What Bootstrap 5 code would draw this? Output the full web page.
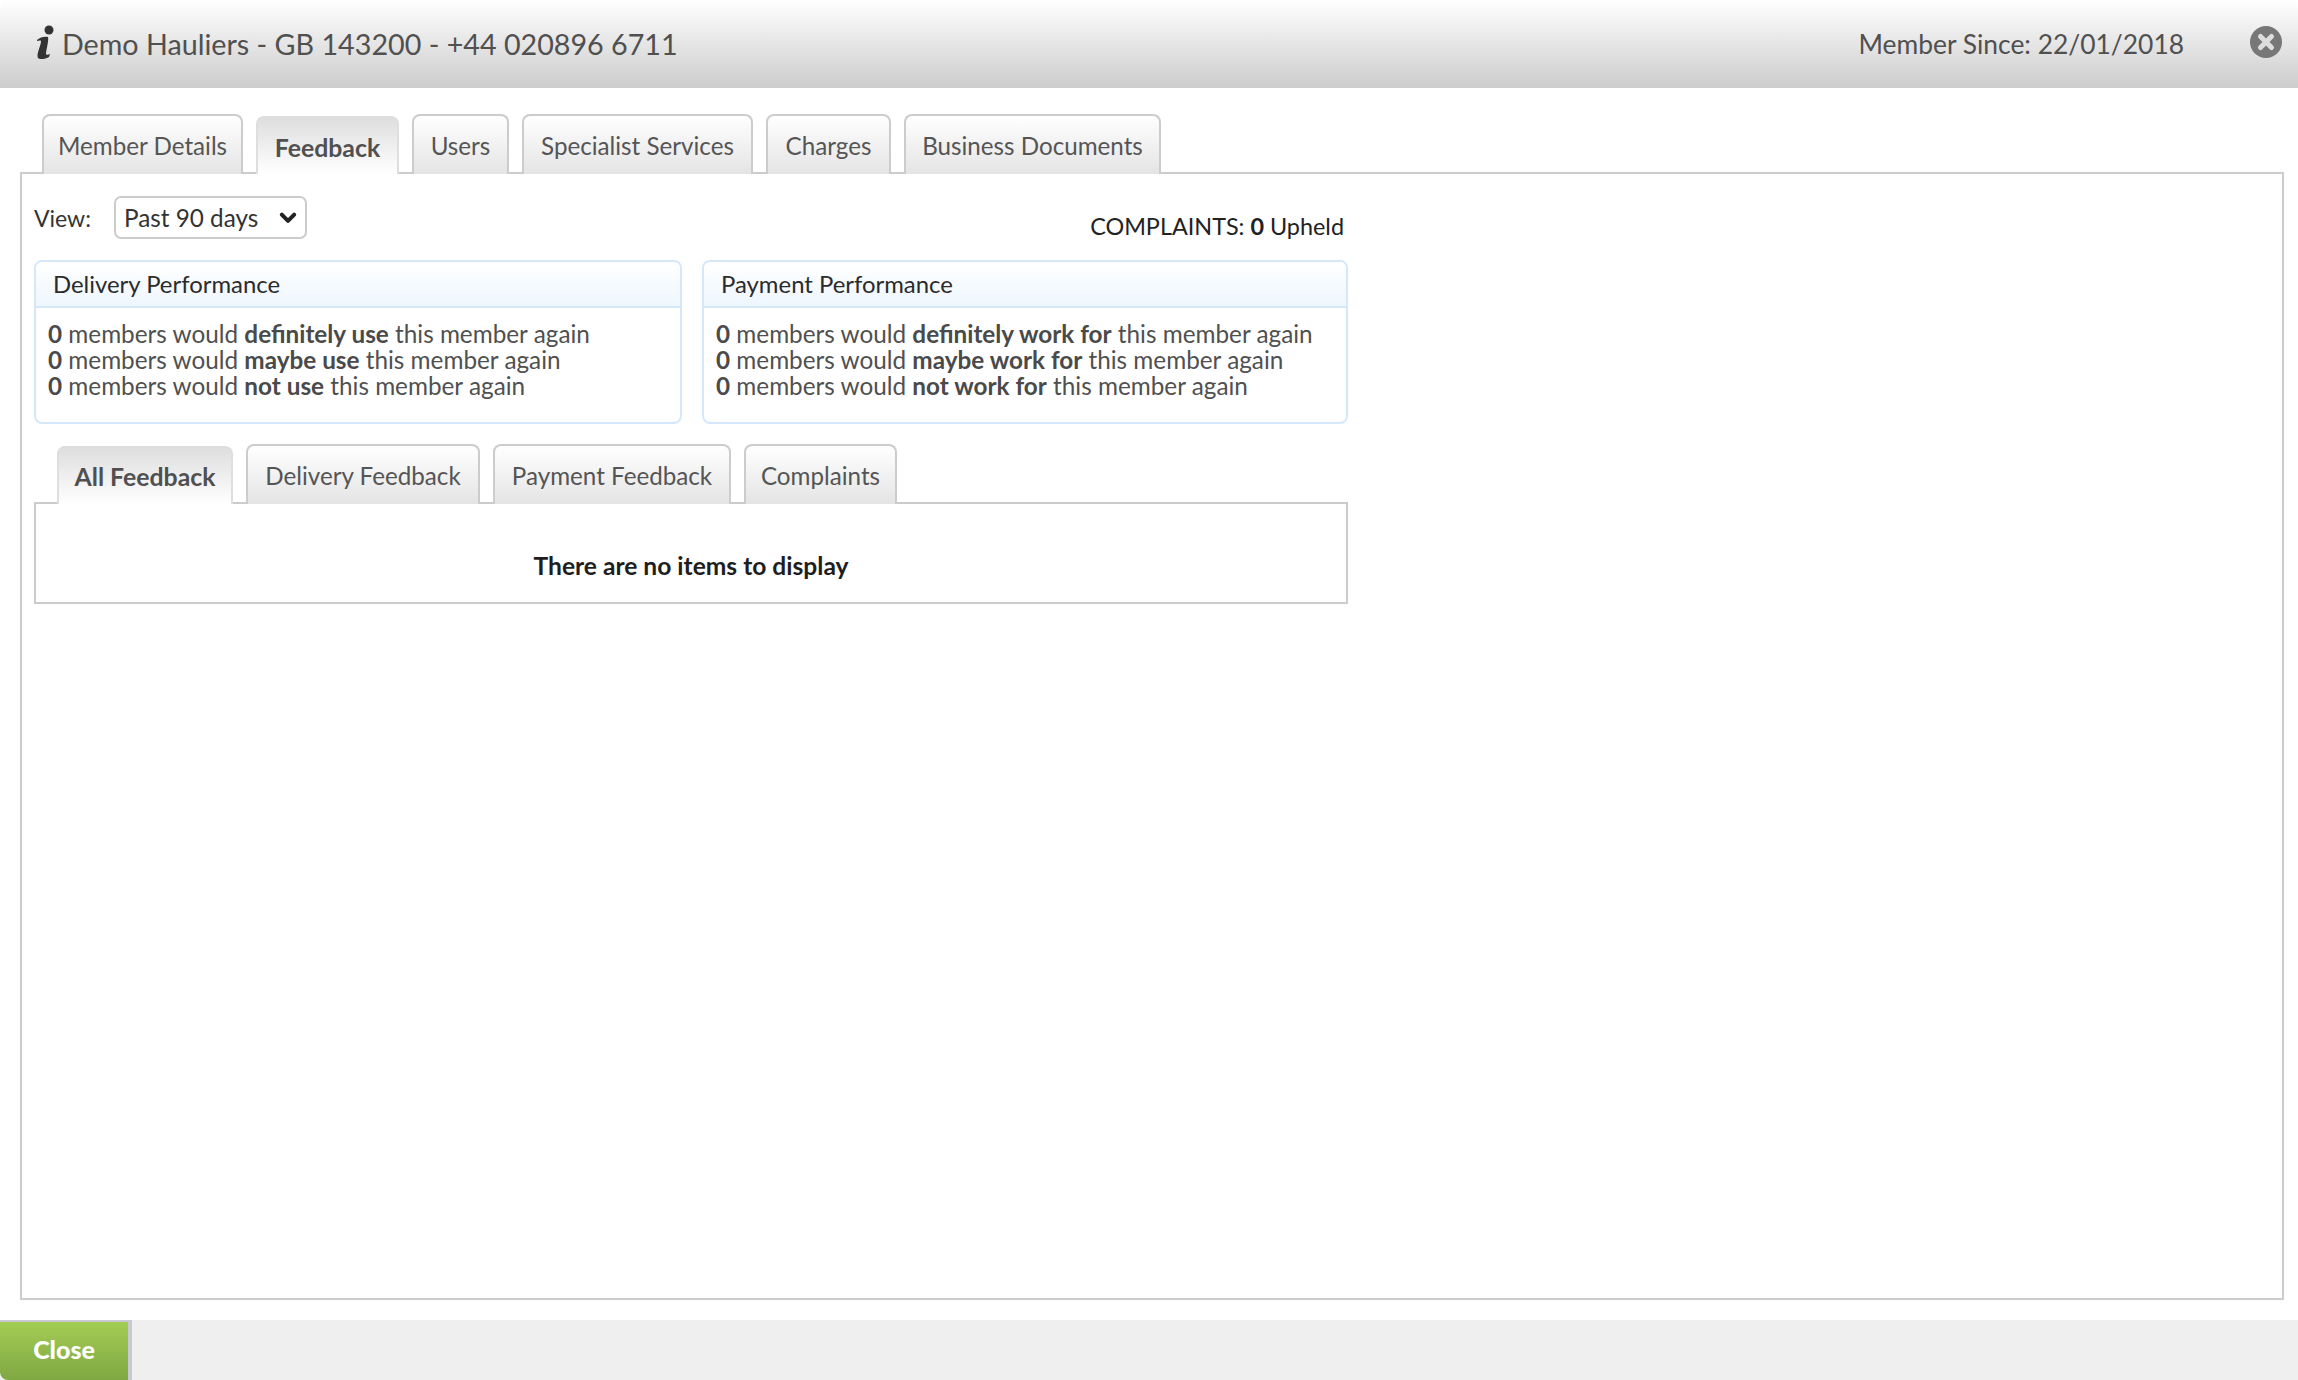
<!DOCTYPE html>
<html lang="en">
<head>
<meta charset="utf-8">
<title>Member</title>
<link rel="stylesheet" href="https://cdn.jsdelivr.net/npm/bootstrap@5.3.0/dist/css/bootstrap.min.css">
<style>
html,body{height:100%;}
body{background:#fff;font-family:Lato,"Liberation Sans",sans-serif;font-size:24.3px;line-height:26px;color:#505050;overflow:hidden;}
.shell{height:1380px;}
.head-bar{height:88px;background:linear-gradient(#fff,#ccc);padding:0 16px 0 34px;border-top-left-radius:10px;font-size:28.7px;color:#505050;}
.info-i{width:24px;height:36px;flex:none;margin-right:4px;margin-top:-2px;filter:blur(.5px);}
.since{font-size:26.4px;margin-right:66px;}
.shut{width:32px;height:32px;flex:none;margin-top:-4px;filter:blur(.4px);}
.main-area{padding:26px 14px 0 20px;flex:1 1 auto;min-height:0;display:flex;flex-direction:column;}
.tab-row{gap:13px;border:0;padding-left:22px;position:relative;z-index:1;}
.tab-row .nav-link{height:60px;margin:0;margin-bottom:-2px;padding:2px 0 0;display:flex;align-items:center;justify-content:center;font-size:24.2px;color:#555;border:2px solid #ccc;border-bottom:0;border-radius:8px 8px 0 0;background:linear-gradient(#fff,#e4e4e4);}
.tab-row .nav-link.active{height:58px;margin-top:2px;font-weight:700;font-size:24.8px;color:#505050;border-color:#dedede;background:linear-gradient(#dedede,#fff);padding-top:4px;}
.tab-row.sub{padding-left:23px;}
.tab-row.sub .nav-link.active{padding-top:2px;}
.tw-201{width:201px;}.tw-143{width:143px;}.tw-97{width:97px;}.tw-231{width:231px;}.tw-125{width:125px;}.tw-257{width:257px;}
.tw-176{width:176px;}.tw-234{width:234px;}.tw-238{width:238px;}.tw-153{width:153px;}
.frame{border:2px solid #ccc;background:#fff;}
.frame-main{flex:1 1 auto;padding:22px 12px 0 12px;}
.narrow{width:1314px;}
.view-text{color:#333;font-size:23px;}
.view-pick{width:193px;height:43px;margin-left:23px;padding:2px 0 0 8px;font-size:24.3px;color:#333;border:2px solid #ccc;border-radius:7px;background-color:#fff;background-position:right 6px center;background-size:22px 18px;--bs-form-select-bg-img:url("data:image/svg+xml,%3csvg xmlns='http://www.w3.org/2000/svg' viewBox='0 0 16 16'%3e%3cpath fill='none' stroke='%23222' stroke-linecap='round' stroke-linejoin='round' stroke-width='3.6' d='m2.500 5 5.500 5.500 5.500-5.500'/%3e%3c/svg%3e");}
.tally{color:#222;font-size:23.4px;margin-right:4px;margin-top:17px;}
.perf-row{gap:20px;margin-top:21px;}
.perf{width:648px;height:164px;border:2px solid #d5e8fb;border-radius:8px;overflow:hidden;background:#fff;}
.perf + .perf{width:646px;}
.perf-head{height:46px;padding:0 17px;display:flex;align-items:center;font-size:23.9px;color:#2b2b2b;background:linear-gradient(#fff,#eef6fe);border-bottom:2px solid #d5e8fb;}
.perf-body{padding:13px 12px;}
.perf-body b{font-weight:700;color:#4a4a4a;}
.sub-wrap{margin-top:20px;}
.empty-note{height:102px;display:flex;align-items:center;justify-content:center;font-weight:700;font-size:24.6px;color:#1e1e1e;padding-top:25px;}
.foot-bar{height:60px;background:#efefef;margin-top:20px;flex:none;}
.close-btn{width:132px;height:60px;padding:0 0 2px;border:0;border-top:2px solid #c8c8d2;border-right:4px solid #c8c8d2;border-radius:0 0 0 8px;background:linear-gradient(#a3cc54,#7fa843);color:#fff;font-weight:900;font-size:25px;}
</style>
</head>
<body>
<div class="shell d-flex flex-column">
  <header class="head-bar d-flex align-items-center">
    <svg class="info-i" viewBox="0 0 24 36"><circle cx="15" cy="5" r="4.500" fill="#333"/><path d="M3 15c3-3 8-4 11-3 1 4-2 13-2 17 0 1 2 1 4 0l-1 3c-3 2-9 3-11 1-2-4 3-12 3-17-1-1-3 0-4 0z" fill="#333"/></svg>
    <span class="flex-grow-1">Demo Hauliers - GB 143200 - +44 020896 6711</span>
    <span class="since">Member Since: 22/01/2018</span>
    <svg class="shut" viewBox="0 0 32 32"><circle cx="16" cy="16" r="16" fill="#777"/><path d="M10.500 10.500l11 11M21.500 10.500l-11 11" stroke="#ddd" stroke-width="5" stroke-linecap="round"/></svg>
  </header>
  <main class="main-area">
    <ul class="nav nav-tabs tab-row">
      <li class="nav-item"><a class="nav-link tw-201" href="#">Member Details</a></li>
      <li class="nav-item"><a class="nav-link active tw-143" href="#">Feedback</a></li>
      <li class="nav-item"><a class="nav-link tw-97" href="#">Users</a></li>
      <li class="nav-item"><a class="nav-link tw-231" href="#">Specialist Services</a></li>
      <li class="nav-item"><a class="nav-link tw-125" href="#">Charges</a></li>
      <li class="nav-item"><a class="nav-link tw-257" href="#">Business Documents</a></li>
    </ul>
    <section class="frame frame-main">
      <div class="narrow">
        <div class="d-flex justify-content-between align-items-start">
          <div class="d-flex align-items-center">
            <label class="view-text" for="period">View:</label>
            <select id="period" class="form-select view-pick"><option>Past 90 days</option></select>
          </div>
          <div class="tally">COMPLAINTS: <b>0</b> Upheld</div>
        </div>
        <div class="d-flex perf-row">
          <div class="perf">
            <div class="perf-head">Delivery Performance</div>
            <div class="perf-body">
              <div><b>0</b> members would <b>definitely use</b> this member again</div>
              <div><b>0</b> members would <b>maybe use</b> this member again</div>
              <div><b>0</b> members would <b>not use</b> this member again</div>
            </div>
          </div>
          <div class="perf">
            <div class="perf-head">Payment Performance</div>
            <div class="perf-body">
              <div><b>0</b> members would <b>definitely work for</b> this member again</div>
              <div><b>0</b> members would <b>maybe work for</b> this member again</div>
              <div><b>0</b> members would <b>not work for</b> this member again</div>
            </div>
          </div>
        </div>
        <div class="sub-wrap">
          <ul class="nav nav-tabs tab-row sub">
            <li class="nav-item"><a class="nav-link active tw-176" href="#">All Feedback</a></li>
            <li class="nav-item"><a class="nav-link tw-234" href="#">Delivery Feedback</a></li>
            <li class="nav-item"><a class="nav-link tw-238" href="#">Payment Feedback</a></li>
            <li class="nav-item"><a class="nav-link tw-153" href="#">Complaints</a></li>
          </ul>
          <div class="frame empty-note">There are no items to display</div>
        </div>
      </div>
    </section>
  </main>
  <footer class="foot-bar d-flex">
    <button type="button" class="btn close-btn">Close</button>
  </footer>
</div>
<script src="https://cdn.jsdelivr.net/npm/bootstrap@5.3.0/dist/js/bootstrap.bundle.min.js"></script>
</body>
</html>
